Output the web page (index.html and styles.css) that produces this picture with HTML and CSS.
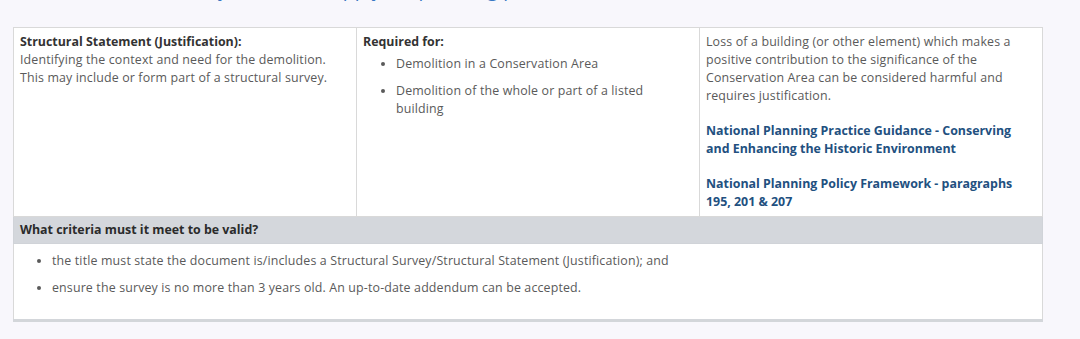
FILE: index.html
```html
<!DOCTYPE html>
<html lang="en">
<head>
<meta charset="utf-8">
<title>Structural Statement</title>
<link rel="stylesheet" href="styles.css">
</head>
<body>
<div class="page">
  <h2 class="cut-heading">Do you need to apply for planning permission?</h2>
  <table class="req-table">
    <tr>
      <td class="cell">
        <strong class="label">Structural Statement (Justification):</strong><br>
        Identifying the context and need for the demolition. This may include or form part of a structural survey.
      </td>
      <td class="cell">
        <strong class="label">Required for:</strong>
        <ul class="list">
          <li>Demolition in a Conservation Area</li>
          <li>Demolition of the whole or part of a listed building</li>
        </ul>
      </td>
      <td class="cell">
        <p class="para">Loss of a building (or other element) which makes a positive contribution to the significance of the Conservation Area can be considered harmful and requires justification.</p>
        <p class="para"><a class="link" href="#">National Planning Practice Guidance - Conserving and Enhancing the Historic Environment</a></p>
        <p class="para last"><a class="link" href="#">National Planning Policy Framework - paragraphs 195, 201 &amp; 207</a></p>
      </td>
    </tr>
    <tr>
      <th class="head-cell" colspan="3">What criteria must it meet to be valid?</th>
    </tr>
    <tr>
      <td class="cell bottom" colspan="3">
        <ul class="list wide">
          <li>the title must state the document is/includes a Structural Survey/Structural Statement (Justification); and</li>
          <li>ensure the survey is no more than 3 years old. An up-to-date addendum can be accepted.</li>
        </ul>
      </td>
    </tr>
  </table>
</div>
</body>
</html>
```

FILE: styles.css
```css
html, body {
  margin: 0;
  padding: 0;
  background: #f8f7fc;
}
body {
  font-family: "Open Sans", "DejaVu Sans", sans-serif;
  font-size: 12.4px;
  letter-spacing: 0.15px;
  color: #5a5a5a;
}
.page {
  padding: 0 0 0 13px;
  width: 1030px;
  height: 339px;
  overflow: hidden;
}
.cut-heading {
  margin: -22px 0 0 0;
  padding-left: 174px;
  height: 49px;
  font-size: 19px;
  line-height: 24px;
  font-weight: 400;
  letter-spacing: 0.3px;
  color: #3a78c3;
}
.req-table {
  width: 1030px;
  border-collapse: collapse;
  table-layout: fixed;
  background: #fff;
  border-bottom: 3px solid #d3d6da;
}
.cell {
  border: 1px solid #d9d9d9;
  vertical-align: top;
  padding: 5px 6px 5px 6px;
  line-height: 18px;
}
.label {
  color: #333;
  font-weight: 700;
  letter-spacing: 0;
}
.list {
  margin: 4px 0 0 0;
  padding-left: 33px;
}
.list li {
  margin-bottom: 9px;
  line-height: 18px;
}
.list li:last-child {
  margin-bottom: 0;
}
.cell.bottom {
  padding-top: 4px;
  padding-bottom: 4px;
}
.list.wide {
  margin: 4px 0 18px 0;
  padding-left: 32px;
}
.para {
  margin: 0 0 17px 0;
}
.para.last {
  margin-bottom: 0;
}
.link {
  color: #22507f;
  font-weight: 700;
  letter-spacing: 0;
  text-decoration: none;
}
.head-cell {
  background: #d4d7dc;
  color: #2b2b2b;
  text-align: left;
  font-weight: 700;
  letter-spacing: 0;
  padding: 4px 6px 4px 6px;
  line-height: 18px;
  border: 1px solid #d0d3d8;
}
```
